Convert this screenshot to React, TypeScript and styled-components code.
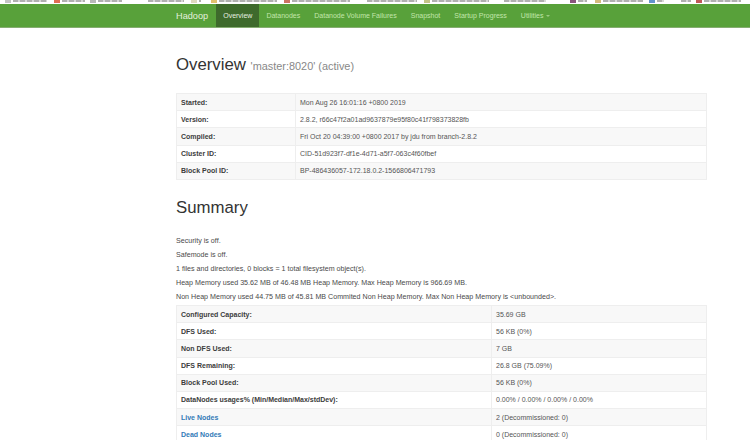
import React from "react";
import styled, { createGlobalStyle } from "styled-components";

const GlobalStyle = createGlobalStyle`
  html, body {
    margin: 0;
    padding: 0;
    background: #fff;
  }
  body {
    width: 750px;
    height: 440px;
    overflow: hidden;
    font-family: "Liberation Sans", Arial, sans-serif;
    font-size: 7px;
    color: #333;
  }
`;

const Bookmarks = styled.div`
  display: flex;
  align-items: flex-start;
  height: 4px;
  overflow: hidden;
  background: #fff;
`;

const Bookmark = styled.span<{ $gap: number }>`
  display: flex;
  flex: none;
  gap: 2px;
  margin-left: ${(p) => p.$gap}px;
`;

const BookmarkIcon = styled.span<{ $color: string }>`
  display: block;
  width: 6px;
  height: 3px;
  background: ${(p) => p.$color};
  opacity: 0.8;
`;

const BookmarkText = styled.span<{ $width: number }>`
  display: block;
  width: ${(p) => p.$width}px;
  height: 2px;
  background: repeating-linear-gradient(to right, #b0b0b0 0 5px, #d8d8d8 5px 7px);
`;

const Navbar = styled.nav`
  display: flex;
  height: 23px;
  padding-left: 176px;
  background: #58a13a;
  border-bottom: 1px solid #86ad72;
`;

const Brand = styled.a`
  display: flex;
  align-items: center;
  margin-right: 8px;
  font-size: 9.2px;
  color: #e4f0dc;
`;

const NavItem = styled.a<{ $active?: boolean }>`
  display: flex;
  align-items: center;
  padding: 0 7px;
  font-size: 7px;
  color: ${(p) => (p.$active ? "#e6efe0" : "#c2e6aa")};
  background: ${(p) => (p.$active ? "#3e6a2c" : "transparent")};
`;

const Caret = styled.span`
  display: inline-block;
  margin-left: 3px;
  border-top: 2px solid #9ccb82;
  border-left: 2px solid transparent;
  border-right: 2px solid transparent;
`;

const Container = styled.main`
  width: 531px;
  margin-left: 176px;
`;

const Title = styled.h1`
  margin: 27px 0 17px;
  font-size: 16.8px;
  line-height: 20px;
  font-weight: 400;
  color: #333;
`;

const Small = styled.small`
  font-size: 10.9px;
  font-weight: 400;
  color: #888;
`;

const Heading = styled.h2`
  margin: 18px 0 16px;
  font-size: 16.8px;
  line-height: 20px;
  font-weight: 400;
  color: #333;
`;

const Table = styled.table`
  width: 100%;
  border-collapse: collapse;
  table-layout: fixed;
`;

const Row = styled.tr`
  height: 17.2px;
  &:nth-child(odd) {
    background: #f8f8f8;
  }
`;

const Label = styled.th`
  width: 110px;
  padding: 0 4px;
  border: 1px solid #eeeeee;
  font-weight: 700;
  font-size: 7px;
  text-align: left;
  color: #3c3c3c;
`;

const WideLabel = styled(Label)`
  width: 306px;
`;

const Value = styled.td`
  padding: 0 4px;
  border: 1px solid #eeeeee;
  font-size: 7px;
  color: #555;
`;

const NodeLink = styled.a`
  color: #337ab7;
`;

const Notes = styled.div`
  margin-bottom: 1px;
`;

const Note = styled.p`
  margin: 0;
  font-size: 7.13px;
  line-height: 14px;
  color: #4a4a4a;
`;

const overview = [
  ["Started:", "Mon Aug 26 16:01:16 +0800 2019"],
  ["Version:", "2.8.2, r66c47f2a01ad9637879e95f80c41f798373828fb"],
  ["Compiled:", "Fri Oct 20 04:39:00 +0800 2017 by jdu from branch-2.8.2"],
  ["Cluster ID:", "CID-51d923f7-df1e-4d71-a5f7-063c4f60fbef"],
  ["Block Pool ID:", "BP-486436057-172.18.0.2-1566806471793"],
];

const notes = [
  "Security is off.",
  "Safemode is off.",
  "1 files and directories, 0 blocks = 1 total filesystem object(s).",
  "Heap Memory used 35.62 MB of 46.48 MB Heap Memory. Max Heap Memory is 966.69 MB.",
  "Non Heap Memory used 44.75 MB of 45.81 MB Commited Non Heap Memory. Max Non Heap Memory is <unbounded>.",
];

const summary = [
  ["Configured Capacity:", "35.69 GB"],
  ["DFS Used:", "56 KB (0%)"],
  ["Non DFS Used:", "7 GB"],
  ["DFS Remaining:", "26.8 GB (75.09%)"],
  ["Block Pool Used:", "56 KB (0%)"],
  ["DataNodes usages% (Min/Median/Max/stdDev):", "0.00% / 0.00% / 0.00% / 0.00%"],
];

const nodes = [
  ["Live Nodes", "2 (Decommissioned: 0)"],
  ["Dead Nodes", "0 (Decommissioned: 0)"],
];

// the browser bookmarks bar is cut off at the top of the shot: gap, icon colour, text width
const bookmarks: [number, string, number][] = [
  [5, "#b5b5b5", 34],
  [7, "#d9482b", 23],
  [5, "#a8a8a8", 24],
  [18, "#ffffff", 36],
  [7, "#d8d0b0", 2],
  [10, "#d9b04a", 58],
  [7, "#c0503c", 58],
  [9, "#ffffff", 50],
  [7, "#b5b56a", 57],
  [7, "#ffffff", 42],
  [24, "#6d2a5c", 9],
  [8, "#c9a95c", 40],
  [6, "#3b78c0", 7],
  [9, "#ffffff", 10],
  [5, "#b03030", 37],
];

function App() {
  return (
    <>
      <GlobalStyle />
      <Bookmarks>
        {bookmarks.map(([gap, color, width], i) => (
          <Bookmark key={i} $gap={gap}>
            <BookmarkIcon $color={color} />
            <BookmarkText $width={width} />
          </Bookmark>
        ))}
      </Bookmarks>
      <Navbar>
        <Brand>Hadoop</Brand>
        <NavItem $active>Overview</NavItem>
        <NavItem>Datanodes</NavItem>
        <NavItem>Datanode Volume Failures</NavItem>
        <NavItem>Snapshot</NavItem>
        <NavItem>Startup Progress</NavItem>
        <NavItem>
          Utilities
          <Caret />
        </NavItem>
      </Navbar>
      <Container>
        <Title>
          Overview <Small>'master:8020' (active)</Small>
        </Title>
        <Table>
          <tbody>
            {overview.map(([k, v]) => (
              <Row key={k}>
                <Label>{k}</Label>
                <Value>{v}</Value>
              </Row>
            ))}
          </tbody>
        </Table>
        <Heading>Summary</Heading>
        <Notes>
          {notes.map((n) => (
            <Note key={n}>{n}</Note>
          ))}
        </Notes>
        <Table>
          <tbody>
            {summary.map(([k, v]) => (
              <Row key={k}>
                <WideLabel>{k}</WideLabel>
                <Value>{v}</Value>
              </Row>
            ))}
            {nodes.map(([k, v]) => (
              <Row key={k}>
                <WideLabel>
                  <NodeLink>{k}</NodeLink>
                </WideLabel>
                <Value>{v}</Value>
              </Row>
            ))}
          </tbody>
        </Table>
      </Container>
    </>
  );
}

export default App;
